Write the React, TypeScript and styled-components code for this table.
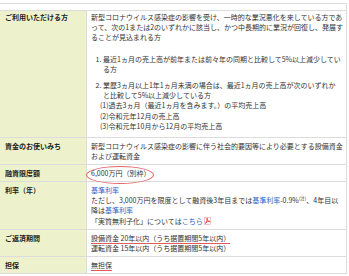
import React from 'react';
import styled, { createGlobalStyle, css } from 'styled-components';

const Global = createGlobalStyle`
  html, body { margin: 0; padding: 0; background: #fff; }
  body {
    font-family: "Noto Sans CJK JP", "Noto Sans", sans-serif;
    font-size: 7px;
    color: #333;
  }
`;

const Page = styled.div`
  padding-top: 3px;
  width: 347px;
`;

const Table = styled.div`
  display: grid;
  grid-template-columns: 87px 1fr;
  border-top: 1px solid #dcdcdc;
  border-right: 1px solid #dcdcdc;
`;

const Spacer = styled.div`
  grid-column: 1 / -1;
  height: 6px;
  border-bottom: 1px solid #dcdcdc;
`;

const cell = css<{ $first?: boolean }>`
  padding: ${(p) => (p.$first ? '1px' : '3px')} 2px 2.8px 4px;
  border-bottom: 1px solid #dcdcdc;
  line-height: 10.2px;
`;

const Th = styled.div<{ $first?: boolean }>`
  ${cell};
  padding-left: 5px;
  background: #eef2cc;
  font-weight: bold;
  border-right: 1px solid #dcdcdc;
  color: #222;
`;

const Td = styled.div<{ $first?: boolean }>`
  ${cell};
  position: relative;
  line-break: normal;
`;

const P = styled.p`
  margin: 0;
`;

const OL = styled.ol`
  margin: 11px 2px 0 0;
  padding-left: 12px;
`;

const LI = styled.li`
  margin-bottom: 6px;
  &:last-child { margin-bottom: 0; }
`;

const Sub = styled.ul`
  list-style: none;
  margin: 0 0 3px -3px;
  padding-left: 0;
`;

const SubItem = styled.li`
  margin: 0;
`;

const Link = styled.span`
  color: #2a63c8;
`;

const Sup = styled.sup`
  font-size: 4.5px;
  vertical-align: 3px;
  line-height: 0;
`;

const RedLine = styled.span`
  border-bottom: 1px solid #e25b5b;
`;

const Ellipse = styled.span`
  position: absolute;
  left: -1px;
  top: 1px;
  width: 68px;
  height: 18px;
  border: 1px solid #e36464;
  border-radius: 50%;
  box-sizing: border-box;
  pointer-events: none;
`;

const PdfIcon = () => (
  <svg width="7" height="8" viewBox="0 0 7 8" style={{ verticalAlign: '-1px', marginLeft: 1 }}>
    <rect x="0.5" y="0.5" width="6" height="7" fill="#fff" stroke="#e9a0a0" strokeWidth="0.6" />
    <path d="M1.5 6.5 C2.5 4.5 3.5 2 3.4 1.2 C3.2 0.8 2.8 1.2 3 2.2 C3.3 3.6 4.5 4.6 5.8 4.7 C6.3 4.6 6 4.1 5.2 4.2 C4 4.3 2.4 5.2 1.5 6.5 Z" fill="none" stroke="#d9312e" strokeWidth="0.8" />
  </svg>
);

export default function App() {
  return (
    <>
      <Global />
      <Page>
        <Table>
          <Spacer />
          <Th $first>ご利用いただける方</Th>
          <Td $first>
            <P>
              新型コロナウイルス感染症の影響を受け、一時的な業況悪化を来している方であって、次の1または2のいずれかに該当し、かつ中長期的に業況が回復し、発展することが見込まれる方
            </P>
            <OL>
              <LI>最近1ヵ月の売上高が前年または前々年の同期と比較して5%以上減少している方</LI>
              <LI>
                業歴3ヵ月以上1年1ヵ月未満の場合は、最近1ヵ月の売上高が次のいずれかと比較して5%以上減少している方
                <Sub>
                  <SubItem>(1)過去3ヵ月（最近1ヵ月を含みます。）の平均売上高</SubItem>
                  <SubItem>(2)令和元年12月の売上高</SubItem>
                  <SubItem>(3)令和元年10月から12月の平均売上高</SubItem>
                </Sub>
              </LI>
            </OL>
          </Td>
          <Th>資金のお使いみち</Th>
          <Td>新型コロナウイルス感染症の影響に伴う社会的要因等により必要とする設備資金および運転資金</Td>
          <Th>融資限度額</Th>
          <Td>
            6,000万円（別枠）
            <Ellipse />
          </Td>
          <Th>利率（年）</Th>
          <Td>
            <P><Link>基準利率</Link></P>
            <P>
              ただし、3,000万円を限度として融資後3年目までは<Link>基準利率</Link>-0.9%<Sup>(注)</Sup>、4年目以降は<Link>基準利率</Link>
            </P>
            <P>
              「実質無利子化」については<Link>こちら</Link>
              <PdfIcon />
            </P>
          </Td>
          <Th>ご返済期間</Th>
          <Td>
            <P><RedLine>設備資金 20年以内（うち据置期間5年以内）</RedLine></P>
            <P>運転資金 15年以内（うち据置期間5年以内）</P>
          </Td>
          <Th>担保</Th>
          <Td>
            <RedLine>無担保</RedLine>
          </Td>
        </Table>
      </Page>
    </>
  );
}
